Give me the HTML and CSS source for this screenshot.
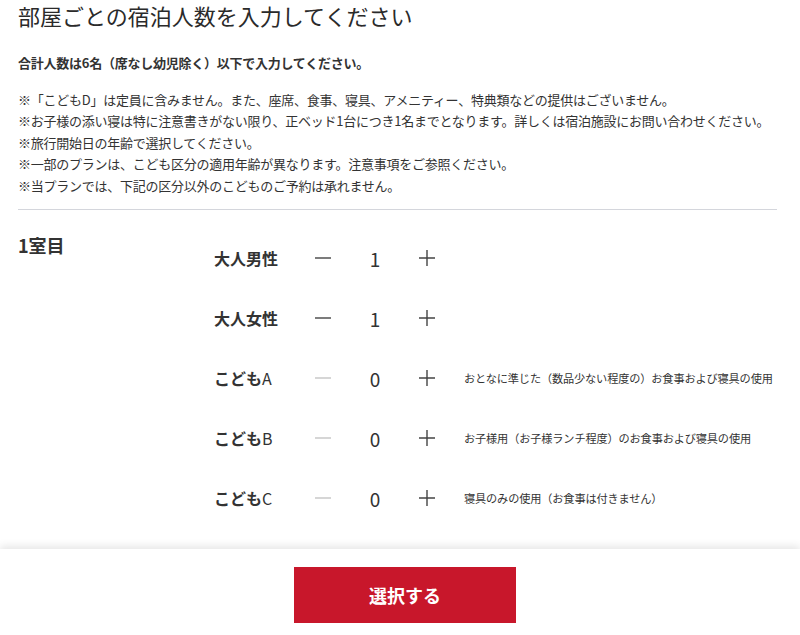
FILE: index.html
```html
<!DOCTYPE html>
<html lang="ja">
<head>
  <meta charset="UTF-8" />
  <meta name="viewport" content="width=device-width, initial-scale=1.0"/>
  <title>宿泊人数の入力</title>
  <link rel="stylesheet" href="styles.css">
</head>
<body>
  <div class="page">
    <h1>部屋ごとの宿泊人数を入力してください</h1>
    <p class="total">合計人数は6名（席なし幼児除く）以下で入力してください。</p>
    <ul class="notes">
      <li>※「こどもD」は定員に含みません。また、座席、食事、寝具、アメニティー、特典類などの提供はございません。</li>
      <li>※お子様の添い寝は特に注意書きがない限り、正ベッド1台につき1名までとなります。詳しくは宿泊施設にお問い合わせください。</li>
      <li>※旅行開始日の年齢で選択してください。</li>
      <li>※一部のプランは、こども区分の適用年齢が異なります。注意事項をご参照ください。</li>
      <li>※当プランでは、下記の区分以外のこどものご予約は承れません。</li>
    </ul>

    <section class="room">
      <h2 class="room-title">1室目</h2>
      <div class="guests">
        <div class="guest-row">
          <span class="guest-label">大人男性</span>
          <button class="step" type="button"><svg width="18" height="18" viewBox="0 0 18 18"><path d="M1 9h16"/></svg></button>
          <span class="count">1</span>
          <button class="step" type="button"><svg width="18" height="18" viewBox="0 0 18 18"><path d="M1 9h16M9 1v16"/></svg></button>
        </div>
        <div class="guest-row">
          <span class="guest-label">大人女性</span>
          <button class="step" type="button"><svg width="18" height="18" viewBox="0 0 18 18"><path d="M1 9h16"/></svg></button>
          <span class="count">1</span>
          <button class="step" type="button"><svg width="18" height="18" viewBox="0 0 18 18"><path d="M1 9h16M9 1v16"/></svg></button>
        </div>
        <div class="guest-row">
          <span class="guest-label">こども<span class="grade">A</span></span>
          <button class="step disabled" type="button"><svg width="18" height="18" viewBox="0 0 18 18"><path d="M1 9h16"/></svg></button>
          <span class="count">0</span>
          <button class="step" type="button"><svg width="18" height="18" viewBox="0 0 18 18"><path d="M1 9h16M9 1v16"/></svg></button>
          <span class="guest-desc">おとなに準じた（数品少ない程度の）お食事および寝具の使用</span>
        </div>
        <div class="guest-row">
          <span class="guest-label">こども<span class="grade">B</span></span>
          <button class="step disabled" type="button"><svg width="18" height="18" viewBox="0 0 18 18"><path d="M1 9h16"/></svg></button>
          <span class="count">0</span>
          <button class="step" type="button"><svg width="18" height="18" viewBox="0 0 18 18"><path d="M1 9h16M9 1v16"/></svg></button>
          <span class="guest-desc">お子様用（お子様ランチ程度）のお食事および寝具の使用</span>
        </div>
        <div class="guest-row">
          <span class="guest-label">こども<span class="grade">C</span></span>
          <button class="step disabled" type="button"><svg width="18" height="18" viewBox="0 0 18 18"><path d="M1 9h16"/></svg></button>
          <span class="count">0</span>
          <button class="step" type="button"><svg width="18" height="18" viewBox="0 0 18 18"><path d="M1 9h16M9 1v16"/></svg></button>
          <span class="guest-desc">寝具のみの使用（お食事は付きません）</span>
        </div>
        <div class="guest-row">
          <span class="guest-label">こども<span class="grade">D</span></span>
          <button class="step disabled" type="button"><svg width="18" height="18" viewBox="0 0 18 18"><path d="M1 9h16"/></svg></button>
          <span class="count">0</span>
          <button class="step" type="button"><svg width="18" height="18" viewBox="0 0 18 18"><path d="M1 9h16M9 1v16"/></svg></button>
          <span class="guest-desc">座席・食事・寝具の提供なし</span>
        </div>
      </div>
    </section>
  </div>

  <footer class="action-bar">
    <button class="select-btn" type="button">選択する</button>
  </footer>
</body>
</html>
```

FILE: styles.css
```css
body {
  font-family: "Noto Sans CJK JP", "Noto Sans", sans-serif;
  color: #333;
  background: #fff;
  margin: 0;
}
.page {
  padding: 0 23px 120px 18px;
}
h1 {
  font-size: 22px;
  font-weight: 400;
  line-height: 30px;
  color: #2a2a2a;
  margin: 0;
}
.total {
  font-size: 13px;
  font-weight: 700;
  letter-spacing: -0.25px;
  line-height: 21.5px;
  margin: 22px 0 0;
}
.notes {
  list-style: none;
  padding: 0 0 13px;
  margin: 15px 0 0;
  font-size: 13px;
  letter-spacing: -0.25px;
  line-height: 21.5px;
  border-bottom: 1px solid #d4d6dc;
}
.room {
  display: flex;
  padding-top: 18px;
}
.room-title {
  width: 196px;
  flex-shrink: 0;
  margin: 2px 0 0;
  font-size: 18px;
  font-weight: 700;
  line-height: 30px;
}
.guests {
  flex: 1;
}
.guest-row {
  display: flex;
  align-items: center;
  height: 60px;
}
.guest-label {
  width: 89px;
  font-size: 16px;
  font-weight: 700;
}
.grade {
  font-weight: 400;
}
.step {
  width: 40px;
  height: 40px;
  padding: 0;
  border: none;
  background: none;
  display: flex;
  align-items: center;
  justify-content: center;
  cursor: pointer;
}
.step svg {
  stroke: #444;
  stroke-width: 1.4;
  fill: none;
}
.step.disabled svg {
  stroke: #c4c4c4;
}
.count {
  width: 64px;
  text-align: center;
  font-size: 19px;
}
.guest-desc {
  margin-left: 17px;
  font-size: 11.2px;
  letter-spacing: -0.15px;
  white-space: nowrap;
}
.action-bar {
  position: fixed;
  left: 0;
  right: 0;
  bottom: 0;
  height: 86px;
  box-sizing: border-box;
  padding: 18px 0 0 10px;
  background: #fff;
  box-shadow: 0 -3px 8px rgba(0, 0, 0, 0.1);
  display: flex;
  justify-content: center;
  align-items: flex-start;
}
.select-btn {
  width: 222px;
  height: 56px;
  border: none;
  background: #c8172b;
  color: #fff;
  font-family: inherit;
  font-size: 18px;
  font-weight: 700;
  cursor: pointer;
}
```
